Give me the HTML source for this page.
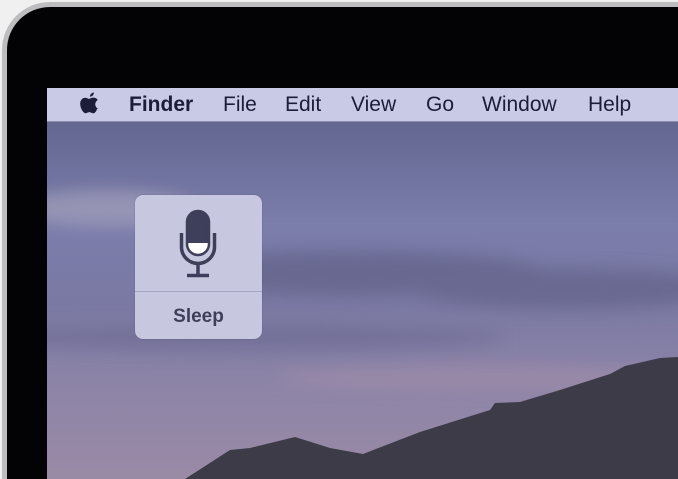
<!DOCTYPE html>
<html><head><meta charset="utf-8"><style>
html,body{margin:0;padding:0;width:678px;height:479px;overflow:hidden;background:#f0f0f0;}
.wrap{position:relative;width:678px;height:479px;overflow:hidden;}
.rim{position:absolute;left:2px;top:2px;width:676px;height:477px;border-radius:48px 0 0 0;background:#bdbdbf;}
.bez{position:absolute;left:7px;top:7px;width:671px;height:472px;border-radius:43px 0 0 0;background:#030305;}
.screen{position:absolute;left:47px;top:88px;width:631px;height:391px;overflow:hidden;
background:linear-gradient(180deg,#5b5e86 0%,#6c6f9a 18%,#7b7dab 35%,#7a79a3 55%,#8c84a7 75%,#9a8aa6 100%);}
.menubar{position:absolute;left:0;top:0;width:631px;height:33px;background:#c9cbe6;border-bottom:1px solid #8e90b0;}
.m{position:absolute;top:5px;font:21px "Liberation Sans",sans-serif;color:#1c1d38;}
.panel{position:absolute;left:88px;top:107px;width:127px;height:144px;border-radius:8px;background:#c7c8e0;box-shadow:0 0 1px rgba(40,40,70,.5);}
.div{position:absolute;left:0;top:96px;width:127px;height:1px;background:#a5a6c2;}
.sl{position:absolute;left:0;top:111px;width:127px;text-align:center;font:bold 19px "Liberation Sans",sans-serif;color:#3e3f5a;}
</style></head><body><div class="wrap">
<div class="rim"></div><div class="bez"></div>
<div class="screen">
<svg width="631" height="391" style="position:absolute;left:0;top:0">
<defs><filter id="b"><feGaussianBlur stdDeviation="8"/></filter></defs>
<g filter="url(#b)" opacity=".55">
<ellipse cx="60" cy="120" rx="90" ry="18" fill="#b0aac0"/>
<ellipse cx="300" cy="185" rx="200" ry="22" fill="#5a5a80"/>
<ellipse cx="520" cy="200" rx="160" ry="20" fill="#5c5b82"/>
<ellipse cx="200" cy="250" rx="260" ry="14" fill="#6a6790"/>
<ellipse cx="450" cy="290" rx="220" ry="12" fill="#a68ea8"/>
</g>
<path d="M138 391 L183 362 L203 360 L248 349 L283 360 L316 366 L373 344 L443 322 L448 315 L473 314 L513 302 L563 286 L578 278 L613 270 L631 269 L631 391 Z" fill="#3d3b48"/>
</svg>
<div class="menubar">
<svg style="position:absolute;left:32px;top:4px" width="22" height="24" viewBox="0 0 20 22"><path d="M13.5 0.5c0.2 1.8-1.4 3.9-3.4 3.8-0.3-1.8 1.5-3.7 3.4-3.8zM16.6 15.3c-0.8 1.9-1.9 4.2-3.6 4.2-1.5 0-1.9-0.9-3.6-0.9s-2.2 0.9-3.6 0.9C4 19.5 1 15 1 10.9c0-3.6 2.3-5.6 4.5-5.6 1.5 0 2.6 1 3.6 1 0.9 0 2.4-1.1 4-1.1 0.7 0 2.8 0.2 4 2.1-3.4 2-2.8 6.8 0.5 8z" fill="#1c1d38"/></svg>
<span class="m" style="left:82px;font-weight:bold">Finder</span>
<span class="m" style="left:176px">File</span>
<span class="m" style="left:238px">Edit</span>
<span class="m" style="left:304px">View</span>
<span class="m" style="left:379px">Go</span>
<span class="m" style="left:435px">Window</span>
<span class="m" style="left:541px">Help</span>
</div>
<div class="panel">
<svg style="position:absolute;left:0;top:0" width="127" height="96">
<clipPath id="c"><rect x="52" y="16" width="22" height="44" rx="11"/></clipPath>
<rect x="52" y="16" width="22" height="44" rx="11" fill="#3e3f5a"/>
<rect x="52" y="48" width="22" height="20" fill="#fff" clip-path="url(#c)"/>
<rect x="52" y="16" width="22" height="44" rx="11" fill="none" stroke="#3e3f5a" stroke-width="2.5"/>
<path d="M46.5 38 V52 A16.5 16.5 0 0 0 79.5 52 V38" fill="none" stroke="#3e3f5a" stroke-width="3.5"/>
<path d="M63 68 V80 M52 80.5 H74" stroke="#3e3f5a" stroke-width="3.5" fill="none"/>
</svg>
<div class="div"></div>
<div class="sl">Sleep</div>
</div>
</div>
</div></body></html>
